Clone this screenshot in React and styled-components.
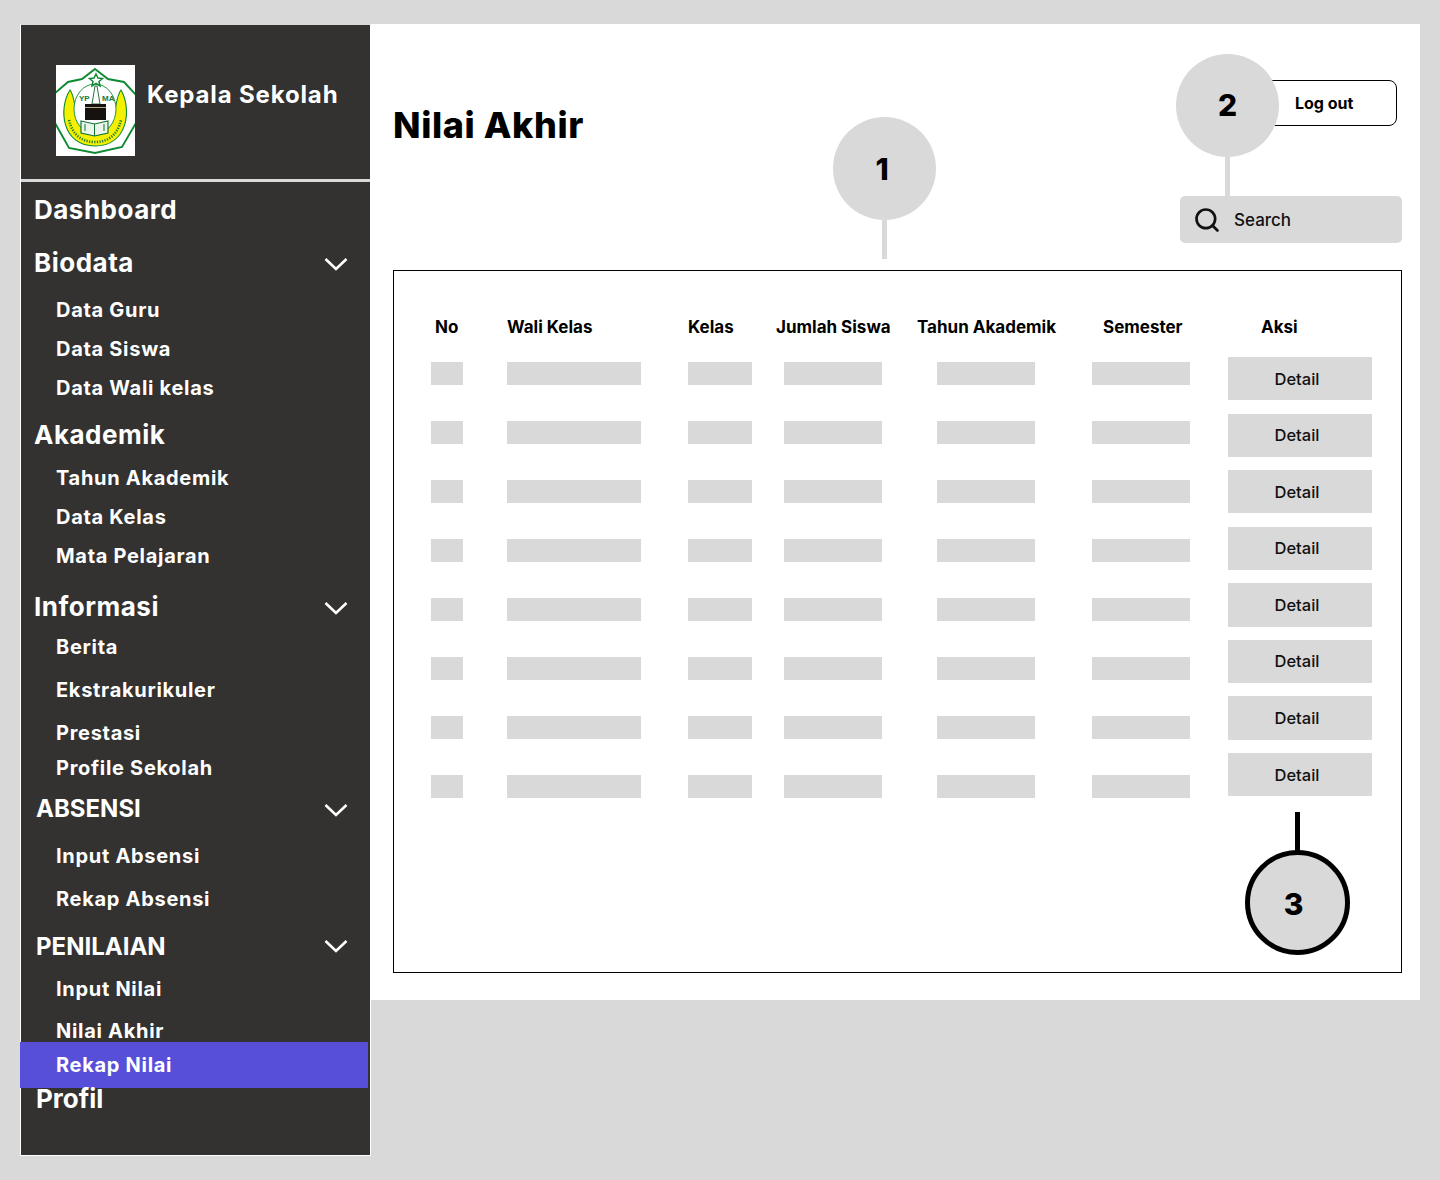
import React from "react";
import styled, { createGlobalStyle } from "styled-components";
import { Search } from "lucide-react";

const GlobalStyle = createGlobalStyle`
  html, body {
    margin: 0;
    background: #d9d9d9;
    font-family: "Inter", "Liberation Sans", sans-serif;
  }
  * { box-sizing: border-box; }
`;

const Page = styled.div`
  display: flex;
  align-items: flex-start;
  width: 1440px;
  height: 1180px;
  padding: 24px 20px;
  overflow: hidden;
`;

const Sidebar = styled.aside`
  width: 351px;
  height: 1132px;
  flex: none;
  background: #333230;
  border: 1px solid #fff;
  border-top-color: #d9d9d9;
  color: #fff;
`;

const Brand = styled.div`
  display: flex;
  align-items: flex-start;
  gap: 12px;
  height: 157px;
  padding: 40px 0 0 35px;
  border-bottom: 3px solid #d9d9d9;
`;

const BrandName = styled.div`
  margin-top: 15px;
  font-size: 24px;
  line-height: 30px;
  font-weight: 700;
  letter-spacing: 0.85px;
  white-space: nowrap;
`;

const Nav = styled.nav`
  display: flex;
  flex-direction: column;
  padding-top: 15px;
`;

const NavRow = styled.div`
  display: flex;
  align-items: center;
  justify-content: space-between;
  height: 24px;
  margin-top: ${({ $top }) => $top}px;
  padding-left: ${({ $indent }) => $indent}px;
  padding-right: 22px;
  font-size: ${({ $sub, $caps }) => ($sub ? 20 : $caps ? 24 : 26)}px;
  font-weight: 700;
  letter-spacing: ${({ $sub, $caps }) => ($sub ? 0.7 : $caps ? 0 : 0.5)}px;
  white-space: nowrap;
`;

const ActiveRow = styled(NavRow)`
  height: 46px;
  width: 348px;
  margin-left: -1px;
  padding-left: 36px;
  background: #574fd8;
`;

const ProfileRow = styled(NavRow)`
  letter-spacing: 0;
`;

const ChevronIcon = styled.svg`
  flex: none;
  margin-top: ${({ $drop }) => $drop}px;
`;

const Main = styled.main`
  position: relative;
  flex: 1;
  height: 976px;
  padding: 0 18px 27px 22px;
  background: #fff;
`;

const TopBar = styled.header`
  display: flex;
  justify-content: space-between;
  height: 246px;
`;

const Title = styled.h1`
  margin: 78px 0 0;
  font-size: 36px;
  line-height: 46px;
  font-weight: 800;
  letter-spacing: 0.6px;
  color: #000;
`;

const TopRight = styled.div`
  display: flex;
  flex-direction: column;
  align-items: flex-end;
  width: 222px;
  padding-top: 56px;
`;

const LogoutButton = styled.button`
  display: flex;
  align-items: center;
  width: 175px;
  height: 46px;
  margin-right: 5px;
  padding: 0 0 0 72px;
  background: #fff;
  border: 1px solid #000;
  border-radius: 8px;
  font: 700 16px "Inter", sans-serif;
  color: #000;
`;

const SearchBox = styled.div`
  display: flex;
  align-items: center;
  gap: 13px;
  width: 222px;
  height: 47px;
  margin-top: 70px;
  padding-left: 13px;
  background: #d9d9d9;
  border-radius: 5px;
  font-size: 17px;
  font-weight: 500;
  color: #111;
`;

const SearchLabel = styled.span`
  margin-top: 1px;
`;

const TablePanel = styled.section`
  height: 703px;
  padding: 46px 0 0 37px;
  border: 1px solid #000;
`;

const HeaderRow = styled.div`
  display: grid;
  grid-template-columns: 76px 181px 88px 141px 175px 136px 144px;
  height: 20px;
  margin-bottom: 20px;
`;

const HeaderCell = styled.div`
  padding-left: ${({ $offset }) => $offset}px;
  font-size: 17px;
  line-height: 20px;
  font-weight: 700;
  color: #000;
  white-space: nowrap;
`;

const Body = styled.div`
  display: grid;
  grid-template-columns: 797px 144px;
`;

const DataRows = styled.div`
  display: flex;
  flex-direction: column;
  gap: 36px;
  padding-top: 5px;
`;

const DataRow = styled.div`
  display: grid;
  grid-template-columns: 76px 181px 88px 141px 175px 136px;
`;

const Placeholder = styled.div`
  width: ${({ $w }) => $w}px;
  height: 23px;
  margin-left: ${({ $offset }) => $offset || 0}px;
  background: #d9d9d9;
`;

const Actions = styled.div`
  display: flex;
  flex-direction: column;
  gap: 13.4px;
`;

const DetailButton = styled.button`
  width: 144px;
  height: 43.2px;
  padding: 0 6px 0 0;
  border: 0;
  background: #d9d9d9;
  font: 500 16.5px "Inter", sans-serif;
  color: #111;
`;

const Bubble = styled.div`
  position: absolute;
  left: ${({ $x }) => $x}px;
  top: ${({ $y }) => $y}px;
  display: flex;
  align-items: center;
  justify-content: center;
  width: ${({ $dark }) => ($dark ? 105 : 103)}px;
  height: ${({ $dark }) => ($dark ? 105 : 103)}px;
  padding: ${({ $pad }) => $pad || 0};
  border-radius: 50%;
  background: #d9d9d9;
  border: ${({ $dark }) => ($dark ? "5px solid #000" : "0")};
  font-size: 30px;
  font-weight: 800;
  color: #000;
`;

const Stem = styled.div`
  position: absolute;
  left: ${({ $x }) => $x}px;
  top: ${({ $y }) => $y}px;
  width: 5px;
  height: ${({ $h }) => $h}px;
  background: ${({ $dark }) => ($dark ? "#000" : "#d9d9d9")};
`;

const menu = [
  { label: "Dashboard", indent: 13, top: 0 },
  { label: "Biodata", indent: 13, top: 29, arrow: 4 },
  { label: "Data Guru", indent: 35, top: 24, sub: true },
  { label: "Data Siswa", indent: 35, top: 15, sub: true },
  { label: "Data Wali kelas", indent: 35, top: 15, sub: true },
  { label: "Akademik", indent: 13, top: 22 },
  { label: "Tahun Akademik", indent: 35, top: 20, sub: true },
  { label: "Data Kelas", indent: 35, top: 15, sub: true },
  { label: "Mata Pelajaran", indent: 35, top: 15, sub: true },
  { label: "Informasi", indent: 13, top: 26, arrow: 4 },
  { label: "Berita", indent: 35, top: 17, sub: true },
  { label: "Ekstrakurikuler", indent: 35, top: 19, sub: true },
  { label: "Prestasi", indent: 35, top: 19, sub: true },
  { label: "Profile Sekolah", indent: 35, top: 11, sub: true },
  { label: "ABSENSI", indent: 15, top: 16, arrow: 4, caps: true },
  { label: "Input Absensi", indent: 35, top: 24, sub: true },
  { label: "Rekap Absensi", indent: 35, top: 19, sub: true },
  { label: "PENILAIAN", indent: 15, top: 23, arrow: 0, caps: true },
  { label: "Input Nilai", indent: 35, top: 19, sub: true },
  { label: "Nilai Akhir", indent: 35, top: 18, sub: true },
];

const cells = [
  { w: 32 },
  { w: 134 },
  { w: 64 },
  { w: 98, offset: 8 },
  { w: 98, offset: 20 },
  { w: 98 },
];

const headers = [
  ["No", 4],
  ["Wali Kelas", 0],
  ["Kelas", 0],
  ["Jumlah Siswa", 0],
  ["Tahun Akademik", 0],
  ["Semester", 11],
  ["Aksi", 33],
];

const rows = [1, 2, 3, 4, 5, 6, 7, 8];

const Chevron = ({ drop }) => (
  <ChevronIcon $drop={drop} width="24" height="14" viewBox="0 0 24 14" fill="none">
    <path d="M1.5 2 12 12 22.5 2" stroke="#fff" strokeWidth="2.6" />
  </ChevronIcon>
);

const Logo = () => (
  <svg width="79" height="91" viewBox="0 0 79 91" style={{ flex: "none" }}>
    <rect width="79" height="91" fill="#fff" />
    <path
      d="M39 4 52 14 68 17 80 30 80 58 66 82 39 88 13 83 -1 58 -1 28 12 17 26 14Z"
      fill="#fff"
      stroke="#0f8a33"
      strokeWidth="1.9"
    />
    <path
      d="M14 25C2 44 6 81 39 81 72 81 76 44 65 25 57 34 62 70 39 70 16 70 22 34 14 25Z"
      fill="#f4f000"
      stroke="#0f8a33"
      strokeWidth="1.1"
    />
    <ellipse cx="39" cy="44" rx="21" ry="25" fill="#fff" stroke="#0f8a33" strokeWidth="0.9" />
    <path
      d="M13 55C17 72 28 77 39 77 50 77 61 72 65 55"
      fill="none"
      stroke="#1c7a34"
      strokeWidth="2.6"
      strokeDasharray="1.2 1.4"
    />
    <path
      d="M40 9 42 13 46.500 13.500 43 16.500 44 21 40 18.500 36 21 37 16.500 33.500 13.500 38 13Z"
      fill="#fff"
      stroke="#0f8a33"
      strokeWidth="1.5"
    />
    <path d="M39 21H41L44 39H36Z" fill="#fff" stroke="#2f6f45" strokeWidth="1" />
    <rect x="29" y="39" width="21" height="16" fill="#15120f" />
    <rect x="29" y="42" width="21" height="1" fill="#b9b08a" />
    <path d="M25 56 38.500 59 52 56V68L38.500 71 25 68Z" fill="#eaf6ea" stroke="#14733a" strokeWidth="1.2" />
    <path d="M38.500 59V71M29 59V66M48 59V66" stroke="#14733a" strokeWidth="1" />
    <text x="23" y="36" fontFamily="Liberation Sans, sans-serif" fontSize="8" fontWeight="700" fill="#167a38">
      YP
    </text>
    <text x="46" y="36" fontFamily="Liberation Sans, sans-serif" fontSize="8" fontWeight="700" fill="#167a38">
      MA
    </text>
  </svg>
);

const App = () => (
  <>
    <GlobalStyle />
    <Page>
      <Sidebar>
        <Brand>
          <Logo />
          <BrandName>Kepala Sekolah</BrandName>
        </Brand>
        <Nav>
          {menu.map((item) => (
            <NavRow
              key={item.label}
              $top={item.top}
              $indent={item.indent}
              $sub={item.sub}
              $caps={item.caps}
            >
              {item.label}
              {item.arrow !== undefined && <Chevron drop={item.arrow} />}
            </NavRow>
          ))}
          <ActiveRow $top={-1} $sub>
            Rekap Nilai
          </ActiveRow>
          <ProfileRow $top={-2} $indent={15}>
            Profil
          </ProfileRow>
        </Nav>
      </Sidebar>
      <Main>
        <TopBar>
          <Title>Nilai Akhir</Title>
          <TopRight>
            <LogoutButton>Log out</LogoutButton>
            <SearchBox>
              <Search size={28} strokeWidth={2.3} color="#111" />
              <SearchLabel>Search</SearchLabel>
            </SearchBox>
          </TopRight>
        </TopBar>
        <TablePanel>
          <HeaderRow>
            {headers.map(([label, offset]) => (
              <HeaderCell key={label} $offset={offset}>
                {label}
              </HeaderCell>
            ))}
          </HeaderRow>
          <Body>
            <DataRows>
              {rows.map((row) => (
                <DataRow key={row}>
                  {cells.map((cell, i) => (
                    <div key={i}>
                      <Placeholder $w={cell.w} $offset={cell.offset} />
                    </div>
                  ))}
                </DataRow>
              ))}
            </DataRows>
            <Actions>
              {rows.map((row) => (
                <DetailButton key={row}>Detail</DetailButton>
              ))}
            </Actions>
          </Body>
        </TablePanel>
        <Stem $x={511} $y={196} $h={39} />
        <Bubble $x={462} $y={93} $pad="0 5px 0 0">1</Bubble>
        <Stem $x={854} $y={133} $h={40} />
        <Bubble $x={805} $y={30} $pad="0 0 2px 0">2</Bubble>
        <Stem $x={924} $y={788} $h={40} $dark />
        <Bubble $x={874} $y={826} $dark $pad="3px 8px 0 0">3</Bubble>
      </Main>
    </Page>
  </>
);

export default App;
